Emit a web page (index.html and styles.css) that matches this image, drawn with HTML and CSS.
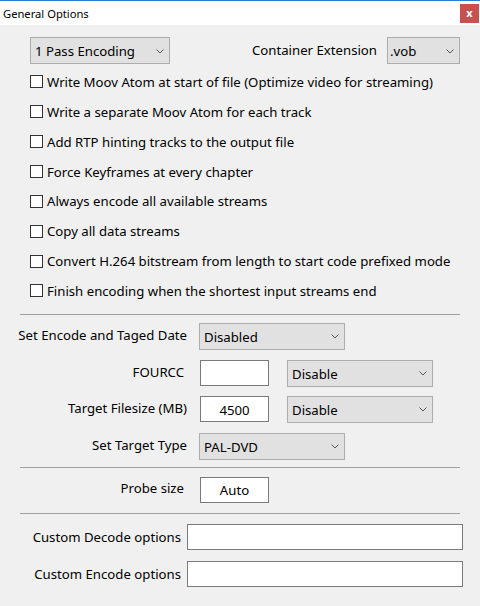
FILE: index.html
```html
<!DOCTYPE html>
<html>
<head>
<meta charset="utf-8">
<title>General Options</title>
<link rel="stylesheet" href="styles.css">
</head>
<body>
<div class="window">
  <div class="titlebar">
    <span class="title">General Options</span>
    <span class="close">x</span>
  </div>
  <div class="content">
    <div class="toprow">
      <div class="combo combo-pass"><span>1 Pass Encoding</span><svg class="chev" width="8" height="5" viewBox="0 0 8 5"><polyline points="0.5,0.5 4,4 7.5,0.5"/></svg></div>
      <span class="lbl-cont">Container Extension</span>
      <div class="combo combo-ext"><span>.vob</span><svg class="chev" width="8" height="5" viewBox="0 0 8 5"><polyline points="0.5,0.5 4,4 7.5,0.5"/></svg></div>
    </div>
    <div class="checks">
      <div class="check"><span class="box"></span><span>Write Moov Atom at start of file (Optimize video for streaming)</span></div>
      <div class="check"><span class="box"></span><span>Write a separate Moov Atom for each track</span></div>
      <div class="check"><span class="box"></span><span>Add RTP hinting tracks to the output file</span></div>
      <div class="check"><span class="box"></span><span>Force Keyframes at every chapter</span></div>
      <div class="check"><span class="box"></span><span>Always encode all available streams</span></div>
      <div class="check"><span class="box"></span><span>Copy all data streams</span></div>
      <div class="check"><span class="box"></span><span>Convert H.264 bitstream from length to start code prefixed mode</span></div>
      <div class="check"><span class="box"></span><span>Finish encoding when the shortest input streams end</span></div>
    </div>
    <div class="sep sep1"></div>
    <div class="frow r1">
      <span class="flabel">Set Encode and Taged Date</span>
      <div class="combo combo-mid"><span>Disabled</span><svg class="chev" width="8" height="5" viewBox="0 0 8 5"><polyline points="0.5,0.5 4,4 7.5,0.5"/></svg></div>
    </div>
    <div class="frow r2">
      <span class="flabel narrow">FOURCC</span>
      <div class="tbox"></div>
      <div class="combo combo-side"><span>Disable</span><svg class="chev" width="8" height="5" viewBox="0 0 8 5"><polyline points="0.5,0.5 4,4 7.5,0.5"/></svg></div>
    </div>
    <div class="frow r3">
      <span class="flabel">Target Filesize (MB)</span>
      <div class="tbox">4500</div>
      <div class="combo combo-side"><span>Disable</span><svg class="chev" width="8" height="5" viewBox="0 0 8 5"><polyline points="0.5,0.5 4,4 7.5,0.5"/></svg></div>
    </div>
    <div class="frow r4">
      <span class="flabel">Set Target Type</span>
      <div class="combo combo-mid"><span>PAL-DVD</span><svg class="chev" width="8" height="5" viewBox="0 0 8 5"><polyline points="0.5,0.5 4,4 7.5,0.5"/></svg></div>
    </div>
    <div class="sep sep2"></div>
    <div class="frow r5">
      <span class="flabel narrow">Probe size</span>
      <div class="tbox">Auto</div>
    </div>
    <div class="sep sep3"></div>
    <div class="frow r6">
      <span class="clabel">Custom Decode options</span>
      <div class="tbox wide"></div>
    </div>
    <div class="frow r7">
      <span class="clabel">Custom Encode options</span>
      <div class="tbox wide"></div>
    </div>
  </div>
</div>
</body>
</html>
```

FILE: styles.css
```css
html, body {
  margin: 0;
  padding: 0;
  background: #f0f0f0;
}

body {
  font-family: "Noto Sans", "Open Sans", sans-serif;
  font-size: 13.2px;
  color: #000;
}

.window {
  position: relative;
  width: 480px;
  height: 606px;
  background: #f0f0f0;
  overflow: hidden;
}

.titlebar {
  height: 24px;
  border-top: 1px solid #2a7bd2;
  background: #fff;
  display: flex;
  align-items: center;
  justify-content: space-between;
  padding-left: 3px;
}

.title {
  font-size: 11.2px;
}

.close {
  width: 19px;
  height: 19px;
  margin-right: 1px;
  background: #c75050;
  color: #fff;
  font-weight: bold;
  font-size: 11px;
  display: flex;
  align-items: center;
  justify-content: center;
  line-height: 1;
  padding-bottom: 2px;
  box-sizing: border-box;
}

.content {
  padding-top: 12px;
}

.toprow {
  display: flex;
  align-items: center;
  height: 27px;
  padding: 0 20px 0 30px;
}

.combo {
  height: 27px;
  box-sizing: border-box;
  border: 1px solid #adadad;
  background: #e1e1e1;
  display: flex;
  align-items: center;
  padding-left: 4px;
  padding-top: 1px;
  white-space: nowrap;
}

.chev {
  margin-left: auto;
  margin-right: 5px;
  fill: none;
  stroke: #555;
  stroke-width: 1;
}

.combo-pass { width: 140px; }
.lbl-cont { margin-left: 82px; padding-bottom: 1px; }
.combo-ext { width: 73px; margin-left: auto; padding-left: 2px; }

.checks {
  margin-top: 3px;
}

.check {
  display: flex;
  align-items: center;
  height: 29.86px;
  padding-left: 30px;
  white-space: nowrap;
}

.box {
  width: 13px;
  height: 13px;
  box-sizing: border-box;
  border: 1px solid #333;
  background: #fff;
  margin-right: 4px;
  flex: none;
}

.sep {
  height: 1px;
  background: #a0a0a0;
  margin: 0 20px;
}

.sep1 { margin-top: 8px; }
.sep2 { margin-top: 7px; }
.sep3 { margin-top: 10px; }

.frow {
  display: flex;
  align-items: center;
  height: 27px;
}

.r1 { margin-top: 8px; }
.r2 { margin-top: 10px; }
.r3 { margin-top: 9px; }
.r4 { margin-top: 10px; }
.r5 { margin-top: 9px; height: 26px; }
.r6 { margin-top: 10px; height: 26px; }
.r7 { margin-top: 11px; height: 26px; }

.flabel {
  width: 187px;
  box-sizing: border-box;
  text-align: right;
  padding-bottom: 3px;
  white-space: nowrap;
  flex: none;
}

.flabel.narrow { padding-right: 3px; }

.clabel {
  width: 181px;
  box-sizing: border-box;
  text-align: right;
  white-space: nowrap;
  flex: none;
}

.combo-mid { width: 146px; margin-left: 12px; }
.combo-side { width: 146px; margin-left: 18px; }

.tbox {
  width: 69px;
  height: 26px;
  box-sizing: border-box;
  border: 1px solid #7a7a7a;
  background: #fff;
  margin-left: 13px;
  display: flex;
  align-items: center;
  justify-content: center;
  padding-top: 1px;
}

.tbox.wide {
  width: 276px;
  margin-left: 6px;
}
```
